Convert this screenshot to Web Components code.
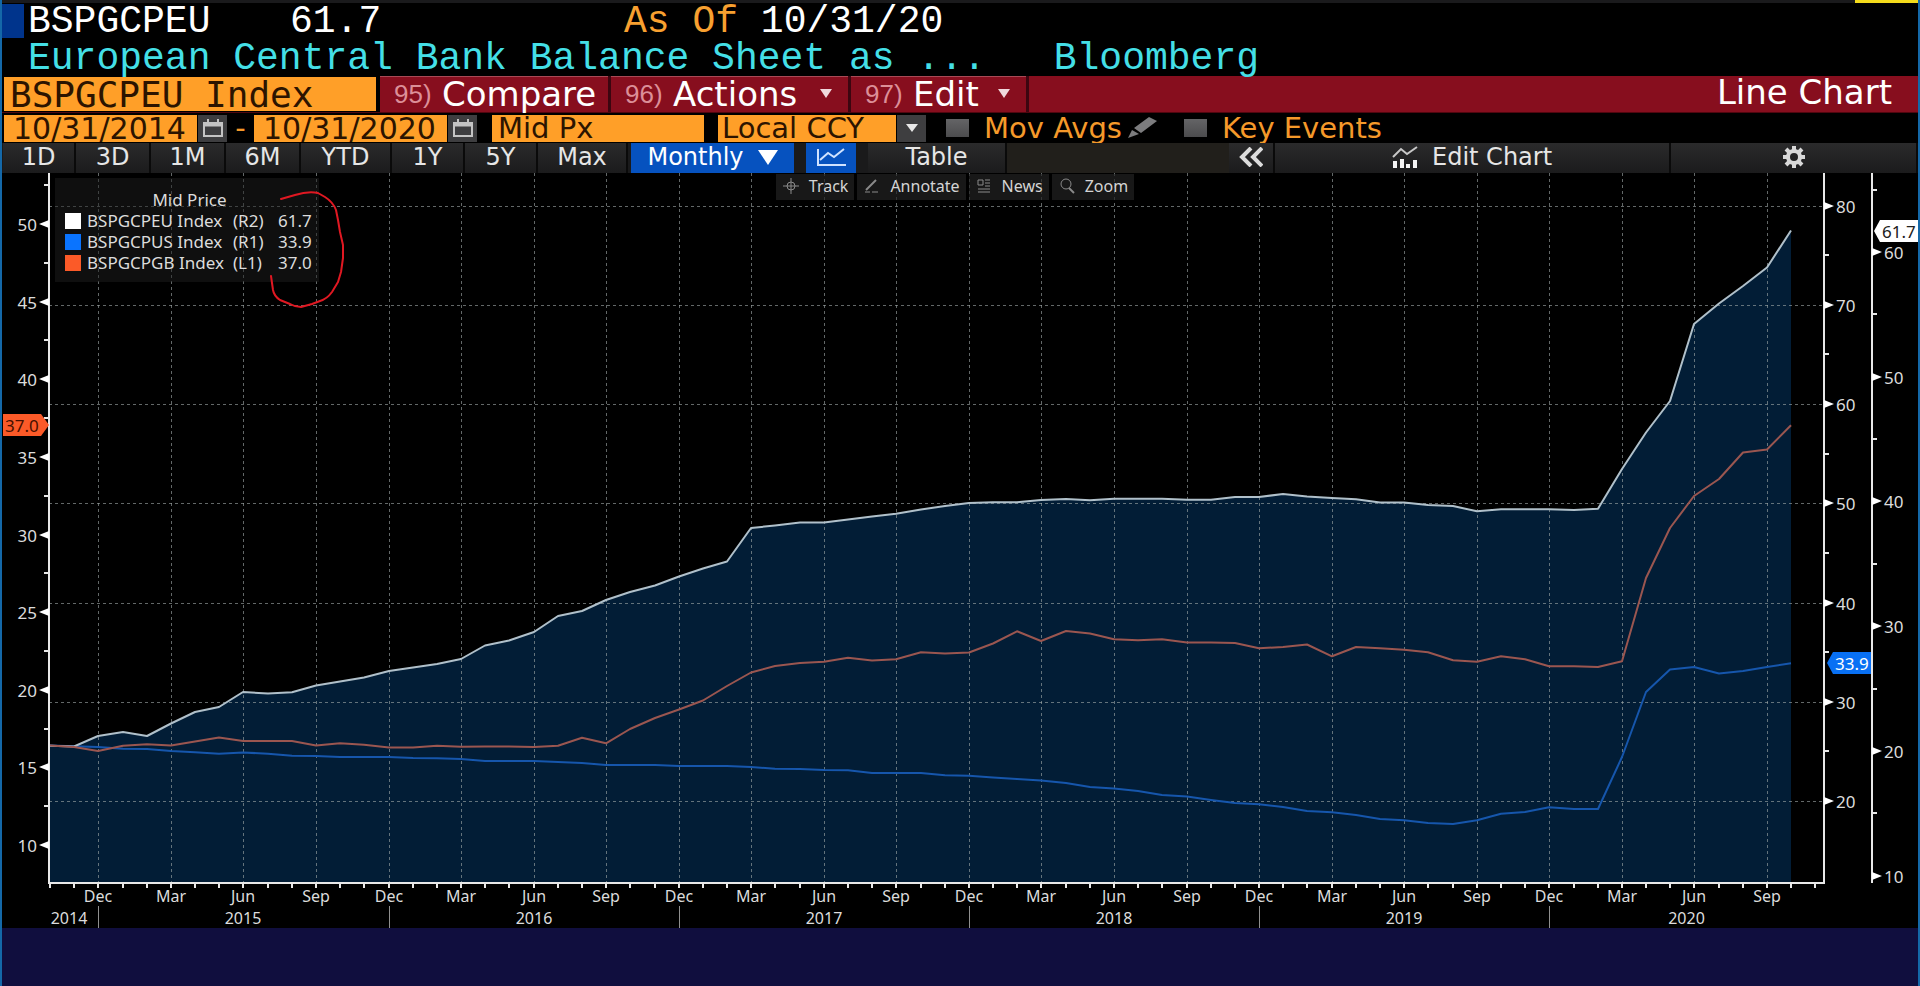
<!DOCTYPE html>
<html lang="en">
<head>
<meta charset="utf-8">
<title>BSPGCPEU Index - Line Chart</title>
<style>
  html { background: #000; }
  body { margin: 0; color: #e4e4e4; font-family: "DejaVu Sans", sans-serif; }
</style>
</head>
<body>
<terminal-window></terminal-window>

<script>
/* Shared base: stamps css() and html() into an open shadow root. */
class TerminalElement extends HTMLElement {
  constructor() {
    super();
    const t = document.createElement('template');
    t.innerHTML = `<style>:host{display:block;box-sizing:border-box}*,*::before{box-sizing:border-box}
      button,input,select{font:inherit;color:inherit;margin:0;border:0;border-radius:0;background:none}
      button{cursor:pointer}${this.constructor.css}</style>${this.constructor.html}`;
    this.attachShadow({ mode: 'open' }).append(t.content.cloneNode(true));
  }
}

/* ---------- security header ---------- */
customElements.define('security-header', class extends TerminalElement {
  static css = `
    :host { background:#000; font-family:"Liberation Mono",monospace; font-size:38px; line-height:38px; border-top:3px solid #1a1a1c; position:relative; white-space:nowrap; }
    :host::after { content:""; position:absolute; right:0; top:-3px; width:63px; height:3px; background:#f4dc1c; }
    .row { display:grid; grid-template-columns:22px 266px 334px 1fr; height:37px; color:#fff; }
    .mark { background:#00348c; height:34px; margin-top:1px; }
    .name { padding-left:4px; }
    .label { color:#f8a030; }
    .sub { height:36px; padding-left:26px; color:#44dfe6; display:flex; gap:68px; }`;
  static html = `
    <div class="row"><span class="mark"></span><span class="name">BSPGCPEU</span><span>61.7</span><span><span class="label">As Of</span> 10/31/20</span></div>
    <div class="sub"><span>European Central Bank Balance Sheet as ...</span><span>Bloomberg</span></div>`;
});

/* ---------- red command bar ---------- */
customElements.define('command-item', class extends TerminalElement {
  static css = `
    :host { border-right:3px solid #3c0610; }
    button { display:flex; align-items:center; width:100%; height:36px; padding:0 0 2px 14px; color:#fff; border-top:1px solid #a84a56; }
    .num { font-family:"Liberation Sans Narrow","Liberation Sans",sans-serif; font-size:26px; color:#dc8f98; width:48px; text-align:left; }
    svg { margin-left:auto; margin-right:16px; }`;
  static html = `<button type="button"><span class="num"></span><slot></slot></button>`;
  connectedCallback() {
    this.shadowRoot.querySelector('.num').textContent = this.getAttribute('num') + ')';
    if (this.hasAttribute('menu'))
      this.shadowRoot.querySelector('button').insertAdjacentHTML('beforeend',
        '<svg width="12" height="9" aria-hidden="true"><path d="M0 0H12L6 9Z" fill="#f0d8dc"/></svg>');
  }
});
customElements.define('command-bar', class extends TerminalElement {
  static css = `
    :host { background:#870e1e; height:37px; font-size:34px; line-height:34px; color:#fff; display:flex; border-bottom:1px solid #50060f; }
    input { width:378px; height:36px; border:1px solid #000; border-width:1px 4px 1px 2px; background:#ff9f28; color:#2c1400; font-family:"DejaVu Sans Mono",monospace; font-size:36px; padding:0 0 0 6px; outline:0; }
    .compare { width:231px; } .actions { width:240px; } .edit { width:178px; }
    h1 { margin:0 26px 0 auto; font:inherit; line-height:33px; }`;
  static html = `
    <input aria-label="Security" value="BSPGCPEU Index">
    <command-item num="95" class="compare">Compare</command-item>
    <command-item num="96" class="actions" menu>Actions</command-item>
    <command-item num="97" class="edit" menu>Edit</command-item>
    <h1>Line Chart</h1>`;
});

/* ---------- date and field row ---------- */
customElements.define('date-field', class extends TerminalElement {
  static css = `
    :host { display:flex; gap:1px; }
    input { width:193px; height:27px; background:#ff9f28; color:#2c1400; font-size:30px; line-height:27px; padding:0 0 0 9px; outline:0; }
    button { width:29px; height:27px; padding:0; background:#3e3e40; display:grid; place-items:center; }`;
  static html = `<input>
    <button type="button" aria-label="Open calendar"><svg width="20" height="18" fill="none" stroke="#c4c4c4" stroke-width="2"><path d="M1 4H19V17H1Z"/><path d="M1 6H19" stroke-width="3"/><path d="M5 0V5M15 0V5"/></svg></button>`;
  connectedCallback() {
    const i = this.shadowRoot.querySelector('input');
    i.value = this.getAttribute('value');
    i.setAttribute('aria-label', this.getAttribute('label'));
  }
});
customElements.define('check-option', class extends TerminalElement {
  static css = `
    label { display:flex; align-items:center; gap:15px; color:#f5992a; }
    input { appearance:none; width:23px; height:18px; background:linear-gradient(#646466,#4c4c4e); }
    input:checked { background:#f5992a; }`;
  static html = `<label><input type="checkbox"><span><slot></slot></span></label>`;
});
customElements.define('field-row', class extends TerminalElement {
  static css = `
    :host { display:flex; align-items:center; height:30px; background:#000; font-size:29px; line-height:27px; padding:0 2px; }
    .dash { width:27px; text-align:center; color:#f5992a; }
    .px { width:212px; height:27px; background:#ff9f28; color:#2c1400; margin-left:15px; padding:0 0 0 6px; outline:0; }
    .ccy { display:flex; margin-left:14px; gap:1px; }
    select { appearance:none; width:178px; height:27px; background:#ff9f28; color:#2c1400; padding:0 0 0 4px; line-height:27px; outline:0; }
    .arrow { width:29px; height:27px; background:#3e3e40; display:grid; place-items:center; }
    check-option { margin-left:20px; }
    .pencil { margin:0 6px; padding:0; width:30px; height:27px; }`;
  static html = `
    <date-field label="From" value="10/31/2014"></date-field>
    <span class="dash">-</span>
    <date-field label="To" value="10/31/2020"></date-field>
    <input class="px" aria-label="Price field" value="Mid Px">
    <span class="ccy"><select aria-label="Currency"><option>Local CCY</option></select><span class="arrow"><svg width="12" height="8"><path d="M0 0H12L6 8Z" fill="#e8e8e8"/></svg></span></span>
    <check-option>Mov Avgs</check-option>
    <button class="pencil" type="button" aria-label="Edit moving averages"><svg width="30" height="22" fill="#7c7c7e"><path d="M0 22 4 14 11 18ZM6 12 21 1 29 5 13 17Z"/></svg></button>
    <check-option>Key Events</check-option>`;
});

/* ---------- period toolbar ---------- */
customElements.define('tool-button', class extends TerminalElement {
  static css = `
    :host { border-right:2px solid #0a0a0a; }
    button { width:100%; height:30px; padding:0 0 2px; display:flex; align-items:center; justify-content:center; gap:14px; background:linear-gradient(#2a2a2b,#1b1b1c); color:#e6e6e6; }
    :host([active]) { border-right:0; }
    :host([active]) button { background:#0652bf; color:#fff; }`;
  static html = `<button type="button"><slot></slot></button>`;
});
customElements.define('period-bar', class extends TerminalElement {
  static css = `
    :host { display:flex; height:30px; background:#1a1a1b; font-size:24px; line-height:28px; padding-left:1px; }
    .w73 { width:73px; } .w75 { width:75px; } .w91 { width:91px; } .w90 { width:90px; }
    .month { width:163px; margin-left:3px; } .line { width:50px; margin:0 12px; } .table { width:139px; }
    .blank { flex:223 1 0; background:#211f1b; } .back { width:46px; } .edit { flex:396 1 0; } .gear { flex:246 1 0; }`;
  static html = `
    <tool-button class="w73">1D</tool-button><tool-button class="w75">3D</tool-button><tool-button class="w75">1M</tool-button><tool-button class="w75">6M</tool-button><tool-button class="w91">YTD</tool-button><tool-button class="w73">1Y</tool-button><tool-button class="w73">5Y</tool-button><tool-button class="w90">Max</tool-button>
    <tool-button class="month" active>Monthly <svg width="20" height="15"><path d="M0 0H20L10 15Z" fill="#fff"/></svg></tool-button>
    <tool-button class="line" active aria-label="Line chart"><svg width="29" height="18" fill="none" stroke="#cfe2ff" stroke-width="2"><path d="M1 1V17H29M3 12 11 5 17 9 27 1"/></svg></tool-button>
    <tool-button class="table">Table</tool-button>
    <span class="blank"></span>
    <tool-button class="back" aria-label="Collapse"><svg width="24" height="20" fill="none" stroke="#dcdcdc" stroke-width="4"><path d="M12 1 3 10 12 19M23 1 14 10 23 19"/></svg></tool-button>
    <tool-button class="edit"><svg width="26" height="22" fill="none" stroke="#c8c8c8" stroke-width="2"><path d="M1 11 9 3 15 8 25 1"/><path d="M3 22V15M10 22V13M16 22V18M23 22V14" stroke="#f4f4f4" stroke-width="4"/></svg><span>Edit Chart</span></tool-button>
    <tool-button class="gear" aria-label="Settings"><svg width="26" height="22" viewBox="-12 -11 24 22" fill="none" stroke="#d8d8d8"><circle r="6" stroke-width="4"/><path d="M0-7V-11M0 7V11M-7 0H-11M7 0H11M-5-5-8-8M5-5 8-8M-5 5-8 8M5 5 8 8" stroke-width="4"/></svg></tool-button>`;
});

/* ---------- legend ---------- */
customElements.define('chart-legend', class extends TerminalElement {
  static css = `
    :host { position:absolute; left:53px; top:5px; width:264px; height:104px; background:rgba(30,30,30,.5); font:17px/21px "Noto Sans",sans-serif; color:#dcdcdc; padding:11px 5px 0 10px; }
    table { border-collapse:collapse; width:100%; table-layout:fixed; }
    caption { text-align:center; } caption, td { padding:0; white-space:nowrap; }
    td:nth-child(1) { width:22px; } td:nth-child(2) { width:146px; } td:nth-child(3) { width:45px; }
    i { display:block; width:16px; height:16px; }
    .eu { background:#fff; } .us { background:#0a74ff; } .gb { background:#fb5a28; }`;
  static html = `<table><caption>Mid Price</caption>
    <tr><td><i class="eu"></i></td><td>BSPGCPEU Index</td><td>(R2)</td><td>61.7</td></tr>
    <tr><td><i class="us"></i></td><td>BSPGCPUS Index</td><td>(R1)</td><td>33.9</td></tr>
    <tr><td><i class="gb"></i></td><td>BSPGCPGB Index</td><td>(L1)</td><td>37.0</td></tr></table>`;
});

/* ---------- chart tools ---------- */
customElements.define('chart-tools', class extends TerminalElement {
  static css = `
    :host { position:absolute; left:0; right:0; top:1px; display:flex; justify-content:center; gap:3px; padding-right:10px; font:16px/24px "Noto Sans",sans-serif; pointer-events:none; }
    button { height:26px; padding:0 6px 2px 7px; display:flex; align-items:center; gap:10px; background:rgba(34,34,34,.7); color:#d4d4d4; pointer-events:auto; }
    svg { fill:none; stroke:#8a8a8a; stroke-width:1; }`;
  static html = `
    <button type="button"><svg width="16" height="18"><path d="M8 1V17M0 9H16"/><circle cx="8" cy="9" r="4"/></svg>Track</button>
    <button type="button"><svg width="16" height="18"><path d="M2 13 12 3" stroke-width="2"/><path d="M1 15H6M8 15H14"/></svg>Annotate</button>
    <button type="button"><svg width="16" height="18"><path d="M2 3H7V8H2ZM9 3H14M9 6H14M9 9H14M2 12H14M2 15H14"/></svg>News</button>
    <button type="button"><svg width="16" height="18"><circle cx="7" cy="7" r="5"/><path d="M10 11 15 16" stroke-width="2"/></svg>Zoom</button>`;
});

/* ---------- chart ---------- */
/* Monthly levels, Oct 2014 to Oct 2020, measured downwards on the LEVEL scale. */
const LEVEL = { top: 173, bottom: 883 };
const EU = [745.7,746.5,736,732,736,723.5,712,707,692,693.5,692.3,685.5,681.5,677.5,671,667.5,664,659,645.5,640.5,632,616,611,600,592,585.5,576.5,568.5,561.5,528,525.5,522.5,522.5,519.5,516.5,513.7,509.5,506,503,502.3,502.3,500,499,500.3,498.7,498.7,498.7,499.8,499.8,497,497,494,496.5,498,499.3,502.5,502.5,505,506,511.3,509.3,509.3,509.3,510,508.7,469,432.5,401,324,303.5,286,267.5,230.5];
const US = [745.5,746.3,747,748.7,749,751,752.3,753.7,752.5,753.7,755.7,756,757,757,757,758,758.3,759,761,761,761,762,763,765,765,765,766,766,766,767,768.7,769,770,770.3,773,773,773,775.3,775.7,777.5,779,780.5,783,787,788.5,791,795,796.5,800,803,804.3,807,811,812.3,815,819,820.3,823,824,820.3,813.7,812,807.3,809,809,757,692,669.5,667,673.5,671,667,663.3];
const GB = [745.5,747,751,745.7,744.3,745.5,741.5,737.5,741,741,741,745.5,743.3,744.7,747.5,747.5,745.7,746.7,746.5,746.5,747,745.7,737.7,743.3,729,718,709.5,700.5,686,672.5,666,663,661.7,657.7,660.5,659.3,652.3,653.5,652.5,643.5,631.3,641,631,633.5,639.3,640.3,639.3,642.5,642.5,643,648.3,647,644.5,656.3,647,648.3,649.7,652.3,660.3,661.7,656.3,659.3,666.3,666.3,667,661.3,578,528,496,479,452.5,449.5,425.3];
const AXES = {
  L1: { lo: 7.55, hi: 53.29, ticks: [10, 15, 20, 25, 30, 35, 40, 45, 50], half: 2.5 },
  R1: { lo: 11.74, hi: 83.28, ticks: [20, 30, 40, 50, 60, 70, 80], half: 5 },
  R2: { lo: 9.41, hi: 66.34, ticks: [10, 20, 30, 40, 50, 60], half: 5 }
};
customElements.define('line-chart', class extends TerminalElement {
  static css = `
    :host { position:relative; flex:1 1 auto; min-height:480px; background:#000; }
    svg.plot { position:absolute; inset:0; width:100%; height:100%; font:17px "Noto Sans",sans-serif; fill:#dcdcdc; }
    .grid { stroke:#a0a8a8; stroke-opacity:.62; stroke-dasharray:3 3; fill:none; }
    .axis { stroke:#e8e8e8; stroke-width:2; fill:none; }
    .year { stroke:#909090; fill:none; }
    .head { fill:#fff; }
    .time { font-size:16px; text-anchor:middle; }
    .series { fill:none; stroke-width:2; stroke-linejoin:round; }`;
  static html = `<svg class="plot" role="img" aria-label="Balance sheet as percent of GDP"></svg><chart-legend></chart-legend><chart-tools></chart-tools>
    <svg class="plot" style="pointer-events:none" aria-hidden="true"><path d="M279 26 293 22Q306 18 316 20L323 24Q331 29 334 37L336 47 338 59 341 72V85L339 99 336 109 330 119Q325 126 318 128L310 131 299 134Q293 134 288 131L278 127Q272 123 271 117L269 103" fill="none" stroke="#e01822" stroke-width="2" stroke-linecap="round" stroke-linejoin="round"/></svg>`;
  connectedCallback() {
    this.draw();
    new ResizeObserver(() => this.draw()).observe(this);
  }
  draw() {
    const W = this.clientWidth, H = this.clientHeight;
    if (!W || !H) return;
    const left = 47, r1 = W - 94, r2 = W - 46, base = H - 45;
    const step = (r1 - left) / 73.4;
    const mx = i => Math.round(left + 1 + i * step);
    const my = v => (v - LEVEL.top) / (LEVEL.bottom - LEVEL.top) * base;
    const ay = (a, v) => Math.round((a.hi - v) / (a.hi - a.lo) * base);
    const line = s => s.map((v, i) => `${mx(i)},${my(v).toFixed(1)}`).join(' ');
    let o = `<polygon points="${mx(0)},${base} ${line(EU)} ${mx(72)},${base}" fill="#021d36"/>`;
    let grid = '', ticks = '', years = '', text = '', heads = '';
    for (const v of AXES.R1.ticks) grid += `M${left} ${ay(AXES.R1, v) + .5}H${r1}`;
    for (let i = 2; i < 73; i += 3) grid += `M${mx(i) + .5} 0V${base}`;
    for (let i = 0; i < 74; i++) ticks += `M${mx(i)} ${base}v5`;
    for (const [key, x, dir] of [['L1', left, -1], ['R1', r1, 1], ['R2', r2, 1]]) {
      const a = AXES[key];
      for (const v of a.ticks) {
        const y = ay(a, v);
        heads += `M${x} ${y - 4}L${x + dir * 10} ${y}L${x} ${y + 4}Z`;
        text += `<text x="${x + dir * 12}" y="${y + 7}" text-anchor="${dir < 0 ? 'end' : 'start'}">${v}</text>`;
      }
      for (let v = a.ticks[0] + a.half; v < a.hi; v += 2 * a.half) ticks += `M${x} ${ay(a, v)}h${dir * 5}`;
    }
    'Dec Mar Jun Sep'.split(' ').forEach((m, k) => {
      for (let i = 2 + 3 * k; i < 73; i += 12) text += `<text class="time" x="${mx(i)}" y="${base + 19}">${m}</text>`;
    });
    for (let i = 2; i < 73; i += 12) years += `M${mx(i) + .5} ${base + 23}V${H}`;
    text += `<text class="time" x="${mx(0) + 19}" y="${base + 41}">2014</text>`;
    [8, 20, 32, 44, 56].forEach((i, k) => text += `<text class="time" x="${mx(i)}" y="${base + 41}">${2015 + k}</text>`);
    text += `<text class="time" x="${(mx(62) + r1) / 2}" y="${base + 41}">2020</text>`;
    const gy = Math.round(my(GB[72])), uy = Math.round(my(US[72])), ey = Math.round(my(EU[72]));
    o += `<path class="grid" d="${grid}"/>
      <polyline class="series" stroke="#1656ac" points="${line(US)}"/>
      <polyline class="series" stroke="#b0c0ca" points="${line(EU)}"/>
      <polyline class="series" stroke="#9a5650" points="${line(GB)}"/>
      <path class="axis" d="M${left} 0V${base}H${r1}M${r1} 0V${base + 1}M${r2} 0V${base}${ticks}"/>
      <path class="year" d="${years}"/><path class="head" d="${heads}"/>${text}
      <path d="M1 ${gy - 11}H39L47 ${gy}L39 ${gy + 11}H1Z" fill="#fb5a28"/><text x="3" y="${gy + 7}" fill="#481000">37.0</text>
      <path d="M${r1 + 3} ${uy}L${r1 + 9} ${uy - 11}H${r2 - 1}V${uy + 11}H${r1 + 9}Z" fill="#0870f4"/><text x="${r1 + 11}" y="${uy + 7}" fill="#fff">33.9</text>
      <path d="M${r2 + 2} ${ey}L${r2 + 8} ${ey - 11}H${W}V${ey + 11}H${r2 + 8}Z" fill="#fff"/><text x="${r2 + 10}" y="${ey + 7}" fill="#202020">61.7</text>`;
    this.shadowRoot.querySelector('svg.plot').innerHTML = o;
  }
});

customElements.define('terminal-window', class extends TerminalElement {
  static css = `
    :host { display:flex; flex-direction:column; min-height:100vh; border:solid #1468a8; border-width:0 2px; background:#000; }
    footer { height:58px; background:#100e3e; }`;
  static html = `<security-header></security-header><command-bar></command-bar><field-row></field-row><period-bar></period-bar><line-chart></line-chart><footer></footer>`;
});
</script>
</body>
</html>
